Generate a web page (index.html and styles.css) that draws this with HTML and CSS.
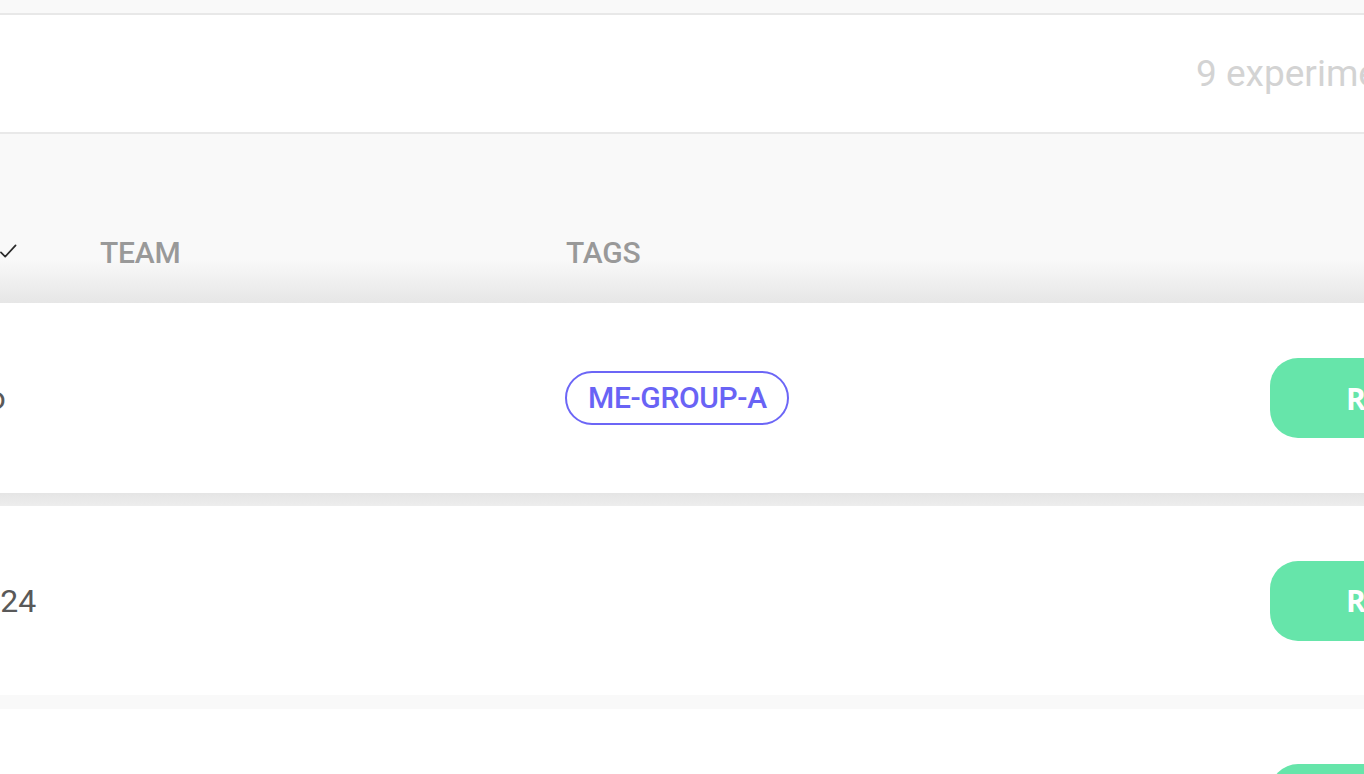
FILE: index.html
```html
<!DOCTYPE html>
<html lang="en">
<head>
<meta charset="utf-8">
<title>Experiments</title>
<link rel="stylesheet" href="styles.css">
</head>
<body>
<div class="page">
  <div class="topbar"></div>
  <div class="summary"><span class="count">9 experiments</span></div>
  <div class="thead grid">
    <div class="th th-first">
      <svg class="check" width="18" height="16" viewBox="0 0 18 16" aria-hidden="true"><path d="M1 9.5 L5.5 14 L16.5 2" fill="none" stroke="#2b2b2b" stroke-width="1.8" stroke-linecap="round" stroke-linejoin="round"/></svg>
    </div>
    <div class="th">TEAM</div>
    <div class="th">TAGS</div>
    <div class="th"></div>
  </div>

  <div class="row grid">
    <div class="td td-first"><span class="clip-inner">1 day ago</span></div>
    <div class="td"></div>
    <div class="td"><span class="tag">ME-GROUP-A</span></div>
    <div class="td"><button class="btn">RUN</button></div>
  </div>
  <div class="sep sep-shadow"></div>

  <div class="row row-b grid">
    <div class="td td-first"><span class="clip-inner">Mar 3, 2024</span></div>
    <div class="td"></div>
    <div class="td"></div>
    <div class="td"><button class="btn">RUN</button></div>
  </div>
  <div class="sep sep-light"></div>

  <div class="row grid">
    <div class="td td-first"><span class="clip-inner">Feb 8, 2024</span></div>
    <div class="td"></div>
    <div class="td"></div>
    <div class="td"><button class="btn">RUN</button></div>
  </div>
</div>
</body>
</html>
```

FILE: styles.css
```css
html, body {
  margin: 0;
  padding: 0;
  background: #ffffff;
}

body {
  font-family: Roboto, "Liberation Sans", Arial, sans-serif;
  overflow: hidden;
}

.page {
  width: 1364px;
  height: 774px;
  overflow: hidden;
}

.topbar {
  height: 13px;
  background: #f9f9f9;
  border-bottom: 2px solid #e8e8e8;
}

.summary {
  height: 117px;
  display: flex;
  align-items: center;
  padding-left: 1196px;
  white-space: nowrap;
  border-bottom: 2px solid #e9e9e9;
}

.count {
  font-size: 37px;
  color: #d3d3d3;
  font-weight: 400;
}

.grid {
  display: grid;
  grid-template-columns: 100px 466px 704px 320px;
  width: 1590px;
}

.thead {
  height: 169px;
  background: linear-gradient(to bottom, #f9f9f9 0%, #f9f9f9 74%, #e6e6e6 100%);
}

.th {
  display: flex;
  align-items: flex-end;
  padding-bottom: 35px;
  font-size: 30px;
  line-height: 30px;
  font-weight: 500;
  color: #999999;
  letter-spacing: -0.2px;
}

.th-first {
  justify-content: flex-end;
  padding-right: 83px;
  padding-bottom: 44px;
  overflow: hidden;
}

.check {
  display: block;
}

.row {
  height: 190px;
  background: #ffffff;
}

.row-b {
  height: 189px;
}

.td {
  display: flex;
  align-items: center;
  font-size: 32px;
  color: #595959;
  white-space: nowrap;
}

.td-first {
  justify-content: flex-end;
  overflow: hidden;
}

.clip-inner {
  flex: 0 0 232px;
  width: 232px;
}

.tag {
  box-sizing: border-box;
  height: 54px;
  display: inline-flex;
  align-items: center;
  padding: 0 20px 1px 21px;
  border: 2px solid #6c66f6;
  border-radius: 27px;
  color: #6963f5;
  font-size: 30px;
  font-weight: 500;
  letter-spacing: -0.35px;
  margin-left: -1px;
  margin-top: -1px;
}

.btn {
  box-sizing: border-box;
  height: 80px;
  width: 240px;
  border: none;
  border-radius: 28px;
  background: #66e5aa;
  color: #ffffff;
  font-family: "Open Sans", "Noto Sans", sans-serif;
  font-weight: 700;
  font-size: 30px;
  text-align: left;
  padding: 0 0 0 76px;
  letter-spacing: 1px;
}

.sep {
  width: 100%;
}

.sep-shadow {
  height: 13px;
  background: linear-gradient(to bottom, #e5e5e5, #ededed);
}

.sep-light {
  height: 14px;
  background: #f9f9f9;
}
```
